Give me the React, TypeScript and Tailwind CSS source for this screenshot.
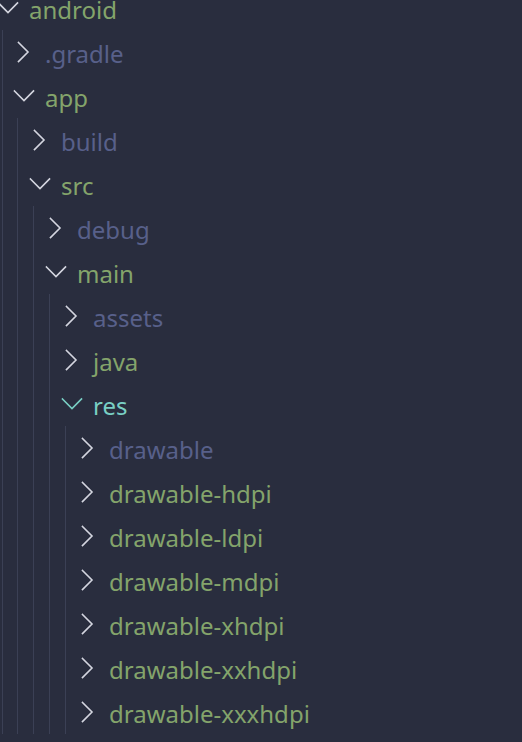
const GREEN = "text-[#84a46b]";
const MUTED = "text-[#58608a]";
const TEAL = "text-[#79cfc4]";

type Row = { name: string; level: number; open: boolean; tone: "green" | "muted" | "teal" };

const ROWS: Row[] = [
  { name: "android", level: 0, open: true, tone: "green" },
  { name: ".gradle", level: 1, open: false, tone: "muted" },
  { name: "app", level: 1, open: true, tone: "green" },
  { name: "build", level: 2, open: false, tone: "muted" },
  { name: "src", level: 2, open: true, tone: "green" },
  { name: "debug", level: 3, open: false, tone: "muted" },
  { name: "main", level: 3, open: true, tone: "green" },
  { name: "assets", level: 4, open: false, tone: "muted" },
  { name: "java", level: 4, open: false, tone: "green" },
  { name: "res", level: 4, open: true, tone: "teal" },
  { name: "drawable", level: 5, open: false, tone: "muted" },
  { name: "drawable-hdpi", level: 5, open: false, tone: "green" },
  { name: "drawable-ldpi", level: 5, open: false, tone: "green" },
  { name: "drawable-mdpi", level: 5, open: false, tone: "green" },
  { name: "drawable-xhdpi", level: 5, open: false, tone: "green" },
  { name: "drawable-xxhdpi", level: 5, open: false, tone: "green" },
  { name: "drawable-xxxhdpi", level: 5, open: false, tone: "green" },
];

function Chevron({ open, teal }: { open: boolean; teal: boolean }) {
  return (
    <svg
      width="22"
      height="22"
      viewBox="0 0 22 22"
      fill="none"
      stroke={teal ? "#79cfc4" : "#d4d6e0"}
      strokeWidth="1.6"
      strokeLinecap="square"
      className="-ml-[3px] shrink-0"
    >
      {open ? <polyline points="1.5,6 11,15.5 20.5,6" /> : <polyline points="5.5,1.5 15,11 5.5,20.5" />}
    </svg>
  );
}

export default function App() {
  return (
    <div className="min-h-screen bg-[#292d3e] overflow-hidden font-['Noto_Sans',sans-serif]">
      <div className="-mt-[14px]">
        {ROWS.map((row) => {
          const tone = row.tone === "green" ? GREEN : row.tone === "teal" ? TEAL : MUTED;
          return (
            <div key={row.name} className="flex h-[44px] items-center">
              {Array.from({ length: row.level }).map((_, i) => (
                <div key={i} className="w-4 h-full shrink-0">
                  <div className={`${i === 0 ? "ml-[2px]" : "ml-[1px]"} w-px h-full bg-[#3b4055]`} />
                </div>
              ))}
              <Chevron open={row.open} teal={row.tone === "teal"} />
              <span className={`ml-[10px] mt-[4px] text-[24px] leading-none whitespace-nowrap ${tone}`}>{row.name}</span>
            </div>
          );
        })}
      </div>
    </div>
  );
}
